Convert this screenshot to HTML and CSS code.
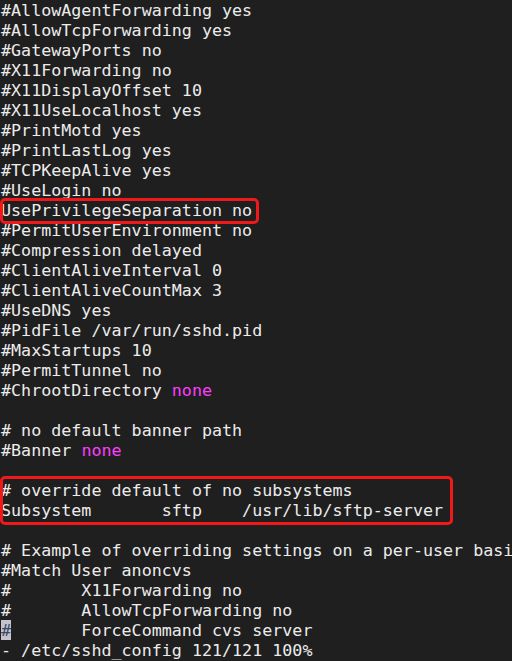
FILE: index.html
```html
<!DOCTYPE html>
<html>
<head>
<meta charset="utf-8">
<link rel="stylesheet" href="styles.css">
</head>
<body>
<div class="term">
<div class="ln">#AllowAgentForwarding yes</div>
<div class="ln">#AllowTcpForwarding yes</div>
<div class="ln">#GatewayPorts no</div>
<div class="ln">#X11Forwarding no</div>
<div class="ln">#X11DisplayOffset 10</div>
<div class="ln">#X11UseLocalhost yes</div>
<div class="ln">#PrintMotd yes</div>
<div class="ln">#PrintLastLog yes</div>
<div class="ln">#TCPKeepAlive yes</div>
<div class="ln">#UseLogin no</div>
<div class="ln">UsePrivilegeSeparation no</div>
<div class="ln">#PermitUserEnvironment no</div>
<div class="ln">#Compression delayed</div>
<div class="ln">#ClientAliveInterval 0</div>
<div class="ln">#ClientAliveCountMax 3</div>
<div class="ln">#UseDNS yes</div>
<div class="ln">#PidFile /var/run/sshd.pid</div>
<div class="ln">#MaxStartups 10</div>
<div class="ln">#PermitTunnel no</div>
<div class="ln">#ChrootDirectory <span class="kw">none</span></div>
<div class="ln"> </div>
<div class="ln"># no default banner path</div>
<div class="ln">#Banner <span class="kw">none</span></div>
<div class="ln"> </div>
<div class="ln"># override default of no subsystems</div>
<div class="ln">Subsystem       sftp    /usr/lib/sftp-server</div>
<div class="ln"> </div>
<div class="ln"># Example of overriding settings on a per-user basis</div>
<div class="ln">#Match User anoncvs</div>
<div class="ln">#       X11Forwarding no</div>
<div class="ln">#       AllowTcpForwarding no</div>
<div class="ln"><span class="cursor">#</span>       ForceCommand cvs server</div>
<div class="ln">- /etc/sshd_config 121/121 100%</div>
<div class="mark mark-a"></div>
<div class="mark mark-b"></div>
</div>
</body>
</html>
```

FILE: styles.css
```css
html, body {
  margin: 0;
  padding: 0;
  background: #1f1f1f;
}
.term {
  position: relative;
  width: 512px;
  height: 661px;
  overflow: hidden;
  padding-left: 1px;
  box-sizing: border-box;
  font-family: "DejaVu Sans Mono", monospace;
  font-size: 16.7px;
  color: #ececec;
}
.ln {
  height: 20px;
  line-height: 20px;
  white-space: pre;
}
.kw {
  color: #ff3cff;
}
.cursor {
  background: #c4c4cc;
  color: #3a4a66;
}
.mark {
  position: absolute;
  border: 3px solid #f01818;
  border-radius: 5px;
  box-sizing: border-box;
}
.mark-a {
  left: 0;
  top: 198px;
  width: 259px;
  height: 26px;
}
.mark-b {
  left: 0;
  top: 476px;
  width: 453px;
  height: 49px;
}
```
